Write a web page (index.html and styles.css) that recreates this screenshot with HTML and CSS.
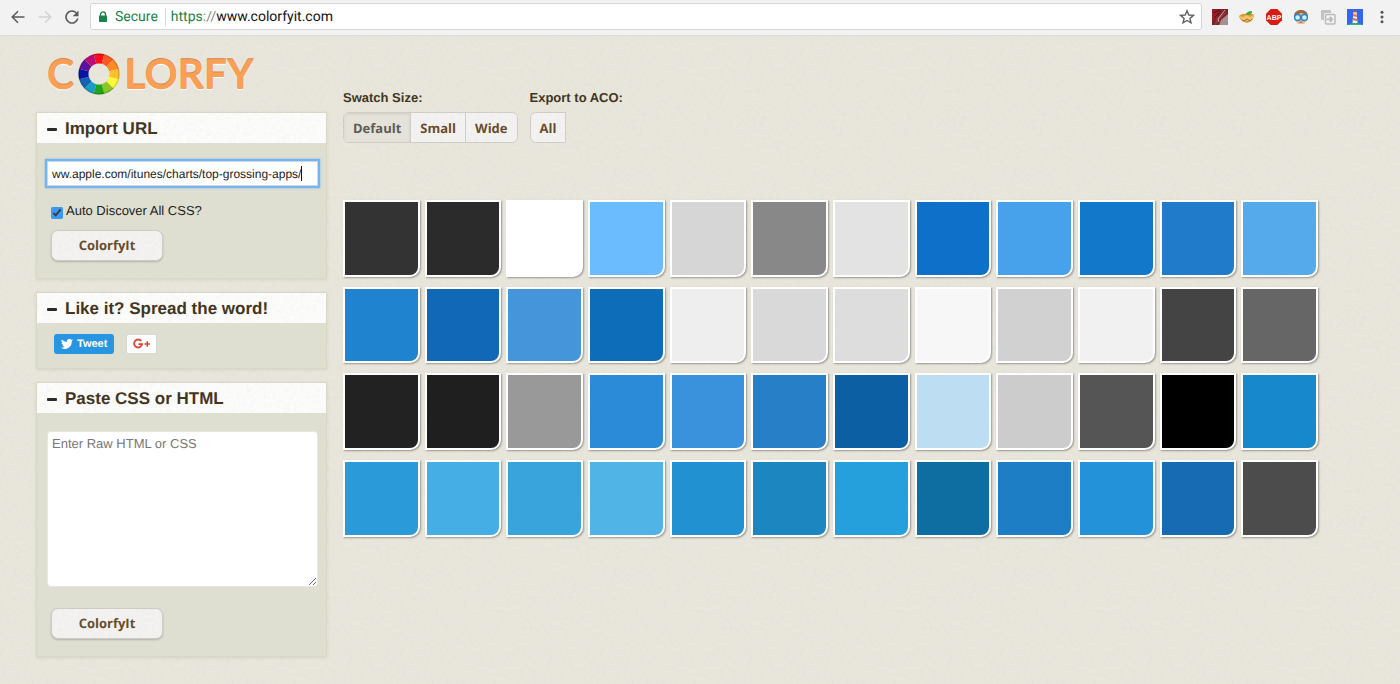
FILE: index.html
```
<!DOCTYPE html>
<html lang="en">
<head>
<meta charset="utf-8">
<meta name="viewport" content="width=device-width, initial-scale=1">
<title>Colorfy It</title>
<link rel="stylesheet" href="styles.css">
</head>
<body>
<header class="toolbar">
  <div class="nav">
    <button class="nav-btn" aria-label="Back"><svg width="16" height="16" viewBox="0 0 16 16" fill="none" stroke="#5a5a5a" stroke-width="1.500"><path d="M14.500 8H2.500M8 2.200 2.200 8 8 13.800"/></svg></button>
    <button class="nav-btn" aria-label="Forward" disabled><svg width="16" height="16" viewBox="0 0 16 16" fill="none" stroke="#d2d2d2" stroke-width="1.500"><path d="M1.500 8h12M8 2.200 13.800 8 8 13.800"/></svg></button>
    <button class="nav-btn" aria-label="Reload"><svg width="16" height="16" viewBox="0 0 16 16"><path d="M12.300 3.800A6 6 0 1 0 13.800 9.500" fill="none" stroke="#5a5a5a" stroke-width="1.600"/><path d="M14.500 1.500v5.800H8.700z" fill="#5a5a5a"/></svg></button>
  </div>
  <div class="omnibox">
    <svg class="lock" width="10" height="12" viewBox="0 0 10 12"><path d="M2.500 5V3.400a2.500 2.500 0 0 1 5 0V5" fill="none" stroke="#1a8348" stroke-width="1.400"/><rect x="1" y="4.600" width="8" height="6.400" rx=".8" fill="#1a8348"/></svg>
    <span class="secure">Secure</span>
    <div class="url" role="textbox" aria-label="Address"><span class="scheme">https</span><span class="slashes">://</span>www.colorfyit.com</div>
    <button class="nav-btn" aria-label="Bookmark this page"><svg width="16" height="16" viewBox="0 0 16 16" fill="none" stroke="#5f6062" stroke-width="1.400"><path d="m8 1.800 1.800 4.200 4.600.4-3.500 3 1.100 4.500L8 11.500l-4 2.400 1.100-4.500-3.500-3 4.600-.4z"/></svg></button>
  </div>
  <div class="extensions">
    <button class="nav-btn" aria-label="Red extension"><svg width="16" height="16" viewBox="0 0 16 16"><rect width="16" height="16" fill="#7e2328"/><path d="M16 5v11H7l2-5z" fill="#a88f8f"/><path d="M16 2 8 10l-4 6H2l4-8z" fill="#8d3a3d"/><path d="M0 2l6-2 2 3-8 9z" fill="#961d24"/><path d="M1 4l7-3M3 8l6-6" stroke="#5d1115"/><path d="m13 1-7 9 1 3" fill="none" stroke="#dfb9b6" stroke-width=".8"/></svg></button>
    <button class="nav-btn" aria-label="Basket extension"><svg width="16" height="16" viewBox="0 0 16 16"><path d="M0 7c3-3 13-3 15-1 0 4-3 7-7 8-4-1-7-3-8-7z" fill="#dd9938"/><path d="m0 7 4 1 4-2 3 2 4-2-2 5-5 1-5-1z" fill="#f3c36b"/><path d="M7 6c0-2 2-4 6-4 0 3-2 4-4 4z" fill="#4ba63b"/><path d="m3 11 2 1 3-2 3 2 2-2" fill="none" stroke="#aa6b21"/></svg></button>
    <button class="nav-btn" aria-label="Adblock Plus"><svg width="16" height="16" viewBox="0 0 16 16"><path d="M4.700 0h6.600L16 4.700v6.600L11.300 16H4.700L0 11.300V4.700z" fill="#d81c12"/><text x="8" y="10.700" class="abp" text-anchor="middle">ABP</text></svg></button>
    <button class="nav-btn" aria-label="Goggles extension"><svg width="16" height="16" viewBox="0 0 16 16"><path d="M2 11V6c0-3 3-5 6-5s6 2 6 5v5l-3 4H5z" fill="#f0bd8e"/><path d="M1 8c0-5 3-7 7-7s7 2 7 7l-3-3-4-1-5 2z" fill="#9d6945"/><circle cx="4.600" cy="8.500" r="3" fill="#d5f1fb" stroke="#2688cb" stroke-width="1.400"/><circle cx="11.400" cy="8.500" r="3" fill="#d5f1fb" stroke="#2688cb" stroke-width="1.400"/><path d="M6.500 13h3" stroke="#ab5140"/></svg></button>
    <button class="nav-btn" aria-label="Share tab"><svg width="16" height="16" viewBox="0 0 16 16"><path d="M1 2q0-1 1-1h8q1 0 1 1v2H5.500Q4 4 4 5.500V11H2.500Q1 11 1 9.500z" fill="#c2c2c2"/><rect x="5.500" y="5.500" width="9.500" height="9.500" rx="1" fill="#f2f2f2" stroke="#bcbcbc" stroke-width="1.500"/><path d="M6.500 10.300h5M9.800 7.800l2.500 2.500-2.500 2.500" fill="none" stroke="#b8b8b8" stroke-width="1.700"/></svg></button>
    <button class="nav-btn" aria-label="Lighthouse"><svg width="16" height="16" viewBox="0 0 16 16"><rect width="16" height="16" fill="#3367f0"/><path d="M6.500 3h3l1 11h-5z" fill="#f5f0e7"/><path d="m6.300 5 3.400 1v2L6.100 7zm-.4 4 4.200 1v2l-4.400-1z" fill="#ee6342"/><path d="M6 3.500 8 1l2 2.500z" fill="#e84c36"/><path d="M6.500 3.500h3V5h-3z" fill="#ffd66a"/><path d="M0 16q8-4 16 0z" fill="#2abb6b"/></svg></button>
    <button class="nav-btn" aria-label="Menu"><svg width="16" height="16" viewBox="0 0 16 16" fill="#555"><circle cx="8" cy="3.300" r="1.500"/><circle cx="8" cy="8" r="1.500"/><circle cx="8" cy="12.700" r="1.500"/></svg></button>
  </div>
</header>

<div class="page">
  <aside class="sidebar">
    <h1 class="logo" aria-label="Colorfy">
      <span>C</span>
      <svg class="wheel" width="42" height="42" viewBox="-21 -21 42 42" fill="none" stroke-width="10">
        <path d="M-4.010-14.970A15.500 15.500 0 0 1 4.010-14.970" stroke="#fb0d1b"/>
        <path d="M4.010-14.970A15.500 15.500 0 0 1 10.960-10.960" stroke="#fc5a20"/>
        <path d="M10.960-10.960A15.500 15.500 0 0 1 14.970-4.010" stroke="#fd8b24"/>
        <path d="M14.970-4.010A15.500 15.500 0 0 1 14.970 4.010" stroke="#fdbe2d"/>
        <path d="M14.970 4.010A15.500 15.500 0 0 1 10.960 10.960" stroke="#fdfb34"/>
        <path d="M10.960 10.960A15.500 15.500 0 0 1 4.010 14.970" stroke="#8cc526"/>
        <path d="M4.010 14.970A15.500 15.500 0 0 1-4.010 14.970" stroke="#1fa51d"/>
        <path d="M-4.010 14.970A15.500 15.500 0 0 1-10.960 10.960" stroke="#1b9cc5"/>
        <path d="M-10.960 10.960A15.500 15.500 0 0 1-14.970 4.010" stroke="#1064b3"/>
        <path d="M-14.970 4.010A15.500 15.500 0 0 1-14.970-4.010" stroke="#0a14a2"/>
        <path d="M-14.970-4.010A15.500 15.500 0 0 1-10.960-10.960" stroke="#5e109b"/>
        <path d="M-10.960-10.960A15.500 15.500 0 0 1-4.010-14.970" stroke="#bd0d73"/>
        <circle r="20" stroke="#000" stroke-opacity=".15" stroke-width="1.500"/>
      </svg>
      <span>LORFY</span>
    </h1>

    <section class="panel">
      <h2 class="panel-title">Import URL</h2>
      <form class="panel-body import-form">
        <div class="url-field">
          <input class="url-input" type="text" aria-label="URL" value="ww.apple.com/itunes/charts/top-grossing-apps/">
          <span class="caret"></span>
        </div>
        <label class="check"><input type="checkbox" checked><span>Auto Discover All CSS?</span></label>
        <button class="btn submit" type="button">ColorfyIt</button>
      </form>
    </section>

    <section class="panel">
      <h2 class="panel-title">Like it? Spread the word!</h2>
      <div class="panel-body share">
        <button class="tweet" type="button"><svg width="12" height="10" viewBox="0 0 24 20" fill="#fff"><path d="M24 2.400a10 10 0 0 1-2.800.8A5 5 0 0 0 23.300.5a10 10 0 0 1-3.100 1.200 4.900 4.900 0 0 0-8.400 4.500A14 14 0 0 1 1.700 1a4.900 4.900 0 0 0 1.500 6.600 5 5 0 0 1-2.200-.6 4.900 4.900 0 0 0 3.900 4.900 5 5 0 0 1-2.200.1 4.900 4.900 0 0 0 4.600 3.400A10 10 0 0 1 0 17.500 14 14 0 0 0 21.500 5z"/></svg>Tweet</button>
        <button class="gplus" type="button" aria-label="Google Plus"><svg width="18" height="12" viewBox="0 0 18 12" fill="none" stroke="#db4437" stroke-width="1.800"><path d="M8.300 3A4 4 0 1 0 9.100 6.200H5.500"/><path d="M11.500 6h5.500M14.250 3.250v5.500" stroke-width="1.500"/></svg></button>
      </div>
    </section>

    <section class="panel">
      <h2 class="panel-title">Paste CSS or HTML</h2>
      <form class="panel-body paste-form">
        <textarea class="source" aria-label="Raw HTML or CSS" placeholder="Enter Raw HTML or CSS"></textarea>
        <button class="btn submit" type="button">ColorfyIt</button>
      </form>
    </section>
  </aside>

  <main class="content">
    <div class="options">
      <div class="option">
        <h3 class="option-title">Swatch Size:</h3>
        <div class="segmented">
          <button class="seg active" type="button">Default</button>
          <button class="seg" type="button">Small</button>
          <button class="seg" type="button">Wide</button>
        </div>
      </div>
      <div class="option">
        <h3 class="option-title">Export to ACO:</h3>
        <div class="segmented export"><button class="seg" type="button">All</button></div>
      </div>
    </div>
    <ul class="swatches">
      <li style="background-color:#333333"></li><li style="background-color:#2b2b2b"></li><li style="background-color:#ffffff"></li><li style="background-color:#6bbcff"></li><li style="background-color:#d6d6d6"></li><li style="background-color:#888888"></li><li style="background-color:#e3e3e3"></li><li style="background-color:#0f70c9"></li><li style="background-color:#48a1eb"></li><li style="background-color:#1278c9"></li><li style="background-color:#207cca"></li><li style="background-color:#55aaec"></li>
      <li style="background-color:#2083cf"></li><li style="background-color:#1068b7"></li><li style="background-color:#4495d9"></li><li style="background-color:#0e6db9"></li><li style="background-color:#eeeeee"></li><li style="background-color:#d9d9d9"></li><li style="background-color:#dddddd"></li><li style="background-color:#f7f7f7"></li><li style="background-color:#d1d1d1"></li><li style="background-color:#f1f1f1"></li><li style="background-color:#444444"></li><li style="background-color:#666666"></li>
      <li style="background-color:#222222"></li><li style="background-color:#1f1f1f"></li><li style="background-color:#999999"></li><li style="background-color:#2b8bd9"></li><li style="background-color:#3992db"></li><li style="background-color:#277fc8"></li><li style="background-color:#0c5fa3"></li><li style="background-color:#bdddf3"></li><li style="background-color:#cccccc"></li><li style="background-color:#555555"></li><li style="background-color:#000000"></li><li style="background-color:#1688cb"></li>
      <li style="background-color:#2a9ad9"></li><li style="background-color:#45aee5"></li><li style="background-color:#39a3dc"></li><li style="background-color:#51b4e7"></li><li style="background-color:#2291d1"></li><li style="background-color:#1b86bf"></li><li style="background-color:#269fdd"></li><li style="background-color:#0e6ea2"></li><li style="background-color:#1d7dc5"></li><li style="background-color:#2492d9"></li><li style="background-color:#176bb3"></li><li style="background-color:#4c4c4c"></li>
    </ul>
  </main>
</div>
</body>
</html>
```
FILE: styles.css
```
:root {
  --grain: url("data:image/svg+xml,%3Csvg xmlns='http://www.w3.org/2000/svg' width='200' height='200'%3E%3Cfilter id='n' x='0' y='0' width='100%25' height='100%25'%3E%3CfeTurbulence type='fractalNoise' baseFrequency='.3' numOctaves='2' stitchTiles='stitch'/%3E%3CfeColorMatrix values='0 0 0 0 .45 0 0 0 0 .42 0 0 0 0 .32 .12 0 0 0 -.03'/%3E%3C/filter%3E%3Crect width='200' height='200' filter='url(%23n)'/%3E%3C/svg%3E");
  --brown: #43361e;
}

* { box-sizing: border-box; }

body {
  margin: 0;
  min-height: 100vh;
  background: #e9e7dd var(--grain);
  font: 13px/16px "Liberation Sans", Arial, sans-serif;
  text-rendering: geometricPrecision;
  color: #222;
}

button, input, textarea { font: inherit; margin: 0; text-rendering: inherit; }
h1, h2, h3, ul { margin: 0; padding: 0; }

.toolbar {
  display: flex;
  align-items: center;
  gap: 10px;
  height: 36px;
  padding: 0 10px 2px;
  background: #f2f2f2;
  border-bottom: 1px solid #dddbd5;
}
.nav { display: flex; gap: 11px; }
.nav-btn { display: flex; padding: 0; border: 0; background: none; }
.omnibox {
  flex: 1;
  display: flex;
  align-items: center;
  height: 27px;
  padding: 0 6px 0 7px;
  background: #fff;
  border: 1px solid #d6d6d6;
  border-radius: 3px;
  font: 14px/18px Roboto, sans-serif;
}
.secure { margin-left: 7px; padding-right: 7px; border-right: 1px solid #d9d9d9; color: #1a8348; }
.url { flex: 1; padding-left: 5px; color: #111; }
.scheme { color: #1a8348; }
.slashes { color: #888; }
.extensions { display: flex; gap: 11px; }
.abp { font: bold 7px "Liberation Sans", sans-serif; fill: #fff; }

.page { display: flex; gap: 16px; padding: 12px 82px 28px 36px; }
.sidebar { flex: 0 0 291px; display: flex; flex-direction: column; gap: 13px; }

.logo {
  display: flex;
  align-items: center;
  gap: 4px;
  height: 51px;
  padding-left: 11px;
  font: 700 41px/56px Lato, sans-serif;
  color: #fb9f55;
  text-shadow: 0 -1px 0 #cf8850, 0 1px 1px #fff;
}

.panel {
  border: 1px solid #d9d8c6;
  background: #dedfd1;
  box-shadow: 0 1px 3px rgba(90, 85, 60, .12);
}
.panel-title {
  display: flex;
  align-items: center;
  gap: 8px;
  height: 30px;
  padding: 2px 0 0 10px;
  background: #fdfdfd var(--grain);
  font-size: 17px;
  line-height: 20px;
  color: var(--brown);
}
.panel-title::before { content: ""; width: 10px; height: 3px; border-radius: 1px; background: #2b2b28; }
.panel-body { display: flex; flex-direction: column; align-items: flex-start; padding: 18px 8px 17px 10px; }

.url-field { position: relative; width: 100%; margin-bottom: 17px; }
.url-input {
  display: block;
  width: 100%;
  height: 25px;
  padding: 0 4px;
  border: 1px solid #ccd8e2;
  background: #fff;
  box-shadow: 0 0 0 2px #77b3ec, 0 0 2px 2px #77b3ec;
  outline: 0;
  font-size: 12px;
  color: #222;
}
.caret { position: absolute; left: 254px; top: 5px; width: 1px; height: 15px; background: #111; }
.check { display: flex; align-items: flex-end; gap: 3px; margin: 0 0 11px 4px; }
.check input { width: 12px; height: 12px; accent-color: #3b99fc; }

.btn {
  background: #f4f3f2 var(--grain);
  border: 1px solid #cdccc4;
  font: 700 13px/18px "Open Sans", sans-serif;
  color: #664d2c;
}
.submit { width: 112px; height: 31px; margin-left: 4px; padding: 0 0 2px; border-radius: 7px; box-shadow: 0 1px 2px rgba(0, 0, 0, .2); }

.share { flex-direction: row; align-items: center; gap: 12px; padding: 11px 17px 14px; }
.tweet, .gplus { display: flex; align-items: center; justify-content: center; height: 20px; border-radius: 3px; }
.tweet { gap: 4px; padding: 0 7px; border: 0; background: #2795e0; color: #fff; font-size: 11px; font-weight: bold; }
.gplus { width: 31px; padding: 0; border: 1px solid #d8d8d3; background: #fff; border-radius: 2px; }

.source {
  width: 100%;
  height: 156px;
  margin-bottom: 21px;
  padding: 4px;
  border: 1px solid #e8e8e2;
  border-radius: 4px;
  background: #fff;
}
.source::placeholder { color: #777; }

.content { flex: 1; min-width: 0; padding-top: 42px; }
.options { display: flex; gap: 12px; margin-bottom: 57px; }
.option-title { margin-bottom: 6px; font-size: 13px; line-height: 16px; color: var(--brown); }
.segmented { display: inline-flex; border: 1px solid #cfcdc5; border-radius: 6px; background: #f4f3f2 var(--grain); overflow: hidden; }
.export { border-radius: 6px 0 0 6px; }
.seg { height: 29px; padding: 0 9px; border: 0; background: none; font: 700 13px/18px "Open Sans", sans-serif; color: #664d2c; }
.seg + .seg { border-left: 1px solid #cfcdc5; }
.seg.active { background: #e5e3d9; box-shadow: inset 0 1px 3px rgba(0, 0, 0, .1); color: #5b5b58; }

.swatches {
  display: grid;
  grid-template-columns: repeat(12, 1fr);
  gap: 10px 5px;
  list-style: none;
}
.swatches li {
  aspect-ratio: 1;
  border: 2px solid #fff;
  border-bottom-right-radius: 10px;
  box-shadow: 1px 1px 2px rgba(0, 0, 0, .35);
}
```
